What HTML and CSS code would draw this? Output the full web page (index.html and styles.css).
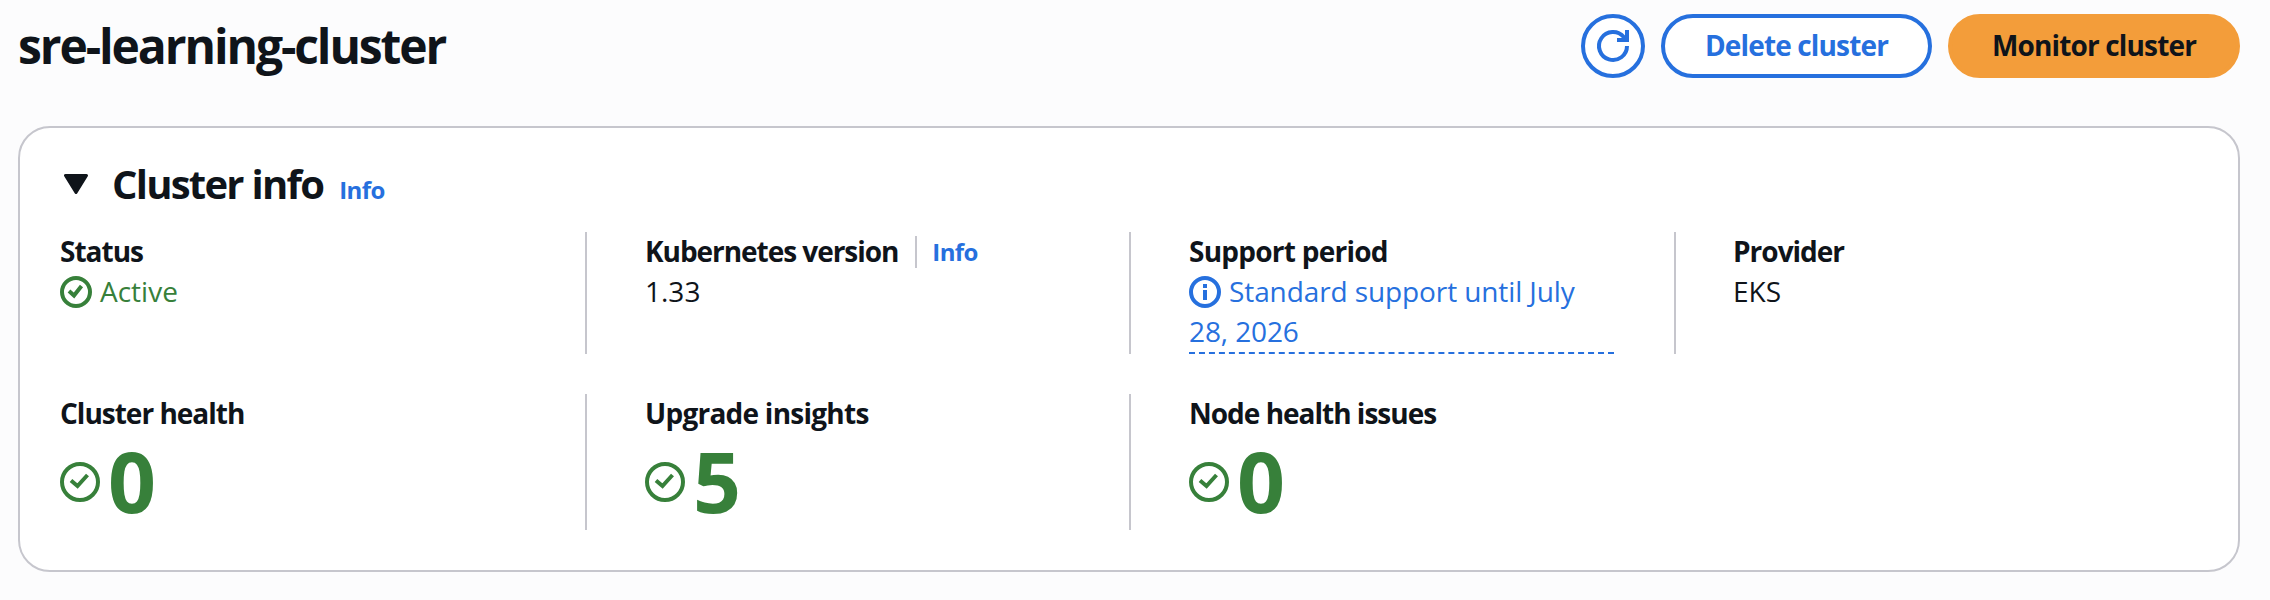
FILE: index.html
```html
<!DOCTYPE html>
<html lang="en">
<head>
<meta charset="utf-8">
<title>sre-learning-cluster</title>
<link rel="stylesheet" href="styles.css">
</head>
<body>
<svg class="sprite" aria-hidden="true">
  <symbol id="ok" viewBox="0 0 32 32"><circle cx="16" cy="16" r="14"/><path d="M9 15l5 4.500L21.500 10"/></symbol>
  <symbol id="ok-large" viewBox="0 0 40 40"><circle cx="20" cy="20" r="18"/><path d="M11 18.500l6.500 5.500L27.500 13"/></symbol>
</svg>
<header class="page-header">
  <h1 class="title">sre-learning-cluster</h1>
  <div class="actions">
    <button class="btn btn-icon" aria-label="Refresh"><svg class="icon" viewBox="0 0 32 32"><path d="M30 16a14 14 0 1 1-3.200-8.900L30 10M30 0v12M20 10h10"/></svg></button>
    <button class="btn btn-normal">Delete cluster</button>
    <button class="btn btn-primary">Monitor cluster</button>
  </div>
</header>
<main class="card">
  <div class="card-header">
    <svg class="caret" viewBox="0 0 24 20"><path d="M1.500 1.500h21L12 18.500z"/></svg>
    <h2 class="card-title">Cluster info</h2>
    <a class="info">Info</a>
  </div>
  <div class="grid">
    <section class="cell">
      <div class="label">Status</div>
      <div class="value ok"><svg class="icon"><use href="#ok"/></svg>Active</div>
    </section>
    <section class="cell">
      <div class="label with-info"><span>Kubernetes version</span><a class="info sep">Info</a></div>
      <div class="value">1.33</div>
    </section>
    <section class="cell">
      <div class="label period">Support period</div>
      <div class="value support"><svg class="icon inline" viewBox="0 0 32 32"><circle cx="16" cy="16" r="14"/><path d="M16 14v10M16 8v4"/></svg>Standard support until July 28, 2026</div>
    </section>
    <section class="cell">
      <div class="label">Provider</div>
      <div class="value">EKS</div>
    </section>
    <section class="cell">
      <div class="label">Cluster health</div>
      <div class="count"><svg class="icon-large"><use href="#ok-large"/></svg>0</div>
    </section>
    <section class="cell">
      <div class="label period">Upgrade insights</div>
      <div class="count"><svg class="icon-large"><use href="#ok-large"/></svg>5</div>
    </section>
    <section class="cell">
      <div class="label">Node health issues</div>
      <div class="count"><svg class="icon-large"><use href="#ok-large"/></svg>0</div>
    </section>
  </div>
</main>
</body>
</html>
```
FILE: styles.css
```css
* { box-sizing: border-box; }
html { overflow: hidden; }
body {
  margin: 0;
  padding: 14px 30px 28px 18px;
  height: 600px;
  background: #fcfcfd;
  color: #0f141a;
  font-family: "Open Sans", "Noto Sans", sans-serif;
  font-size: 28px;
  font-weight: 450;
  line-height: 40px;
}
.sprite { position: absolute; width: 0; height: 0; }
.page-header { display: flex; justify-content: space-between; height: 64px; margin-bottom: 48px; }
.title { margin: 2px 0 0; font-size: 48px; line-height: 60px; font-weight: 700; letter-spacing: -2.1px; }
.actions { display: flex; gap: 16px; }
.btn {
  height: 64px; padding: 0 0 2px; border: 4px solid #2670de; border-radius: 32px;
  display: flex; align-items: center; justify-content: center;
  background: #fff; color: #2670de;
  font: inherit; font-weight: 700; letter-spacing: -0.85px;
}
.btn-icon { width: 64px; padding: 0; }
.btn-normal { width: 271px; }
.btn-primary { width: 292px; background: #f39d3a; border-color: #f39d3a; color: #0f141a; }
.icon, .icon-large { flex: none; fill: none; stroke: currentColor; stroke-width: 4; overflow: visible; }
.icon { width: 32px; height: 32px; }
.icon-large { width: 40px; height: 40px; margin-top: 1px; }
.card { height: 446px; padding: 32px 40px 40px; background: #fff; border: 2px solid #c6c6cd; border-radius: 32px; }
.card-header { display: flex; align-items: baseline; height: 72px; }
.caret { align-self: flex-start; width: 24px; height: 20px; margin: 14px 24px 0 4px; fill: #0f141a; stroke: #0f141a; stroke-width: 3; stroke-linejoin: round; }
.card-title { margin: 0 16px 0 0; font-size: 40px; line-height: 48px; font-weight: 700; letter-spacing: -1.75px; }
.info { color: #2670de; font-size: 24px; font-weight: 700; letter-spacing: -0.6px; }
.grid { display: grid; grid-template-columns: 525px 544px 545px 1fr; grid-template-rows: 122px 136px; row-gap: 40px; }
.cell + .cell { border-left: 2px solid #c6c6cd; padding: 0 60px 0 58px; }
.cell:nth-child(4) { padding-left: 57px; }
.cell + .cell:nth-child(5) { border-left: 0; padding: 0; }
.label { height: 40px; margin-top: -1px; font-weight: 700; letter-spacing: -1px; white-space: nowrap; }
.period { letter-spacing: -0.75px; }
.with-info { display: flex; align-items: center; letter-spacing: -1.05px; }
.sep { margin: 2px 0 0 17px; padding-left: 15px; border-left: 2px solid #c6c6cd; line-height: 32px; }
.value { height: 40px; }
.ok { display: flex; align-items: center; gap: 8px; color: #37803a; }
.ok .icon { margin-top: 2px; }
.support { height: 83px; color: #2670de; border-bottom: 2px dashed #2670de; letter-spacing: -0.1px; }
.inline { margin-right: 8px; vertical-align: -6px; }
.count { display: flex; align-items: center; gap: 8px; height: 96px; color: #37803a; font-size: 84px; line-height: 96px; font-weight: 700; }
```
